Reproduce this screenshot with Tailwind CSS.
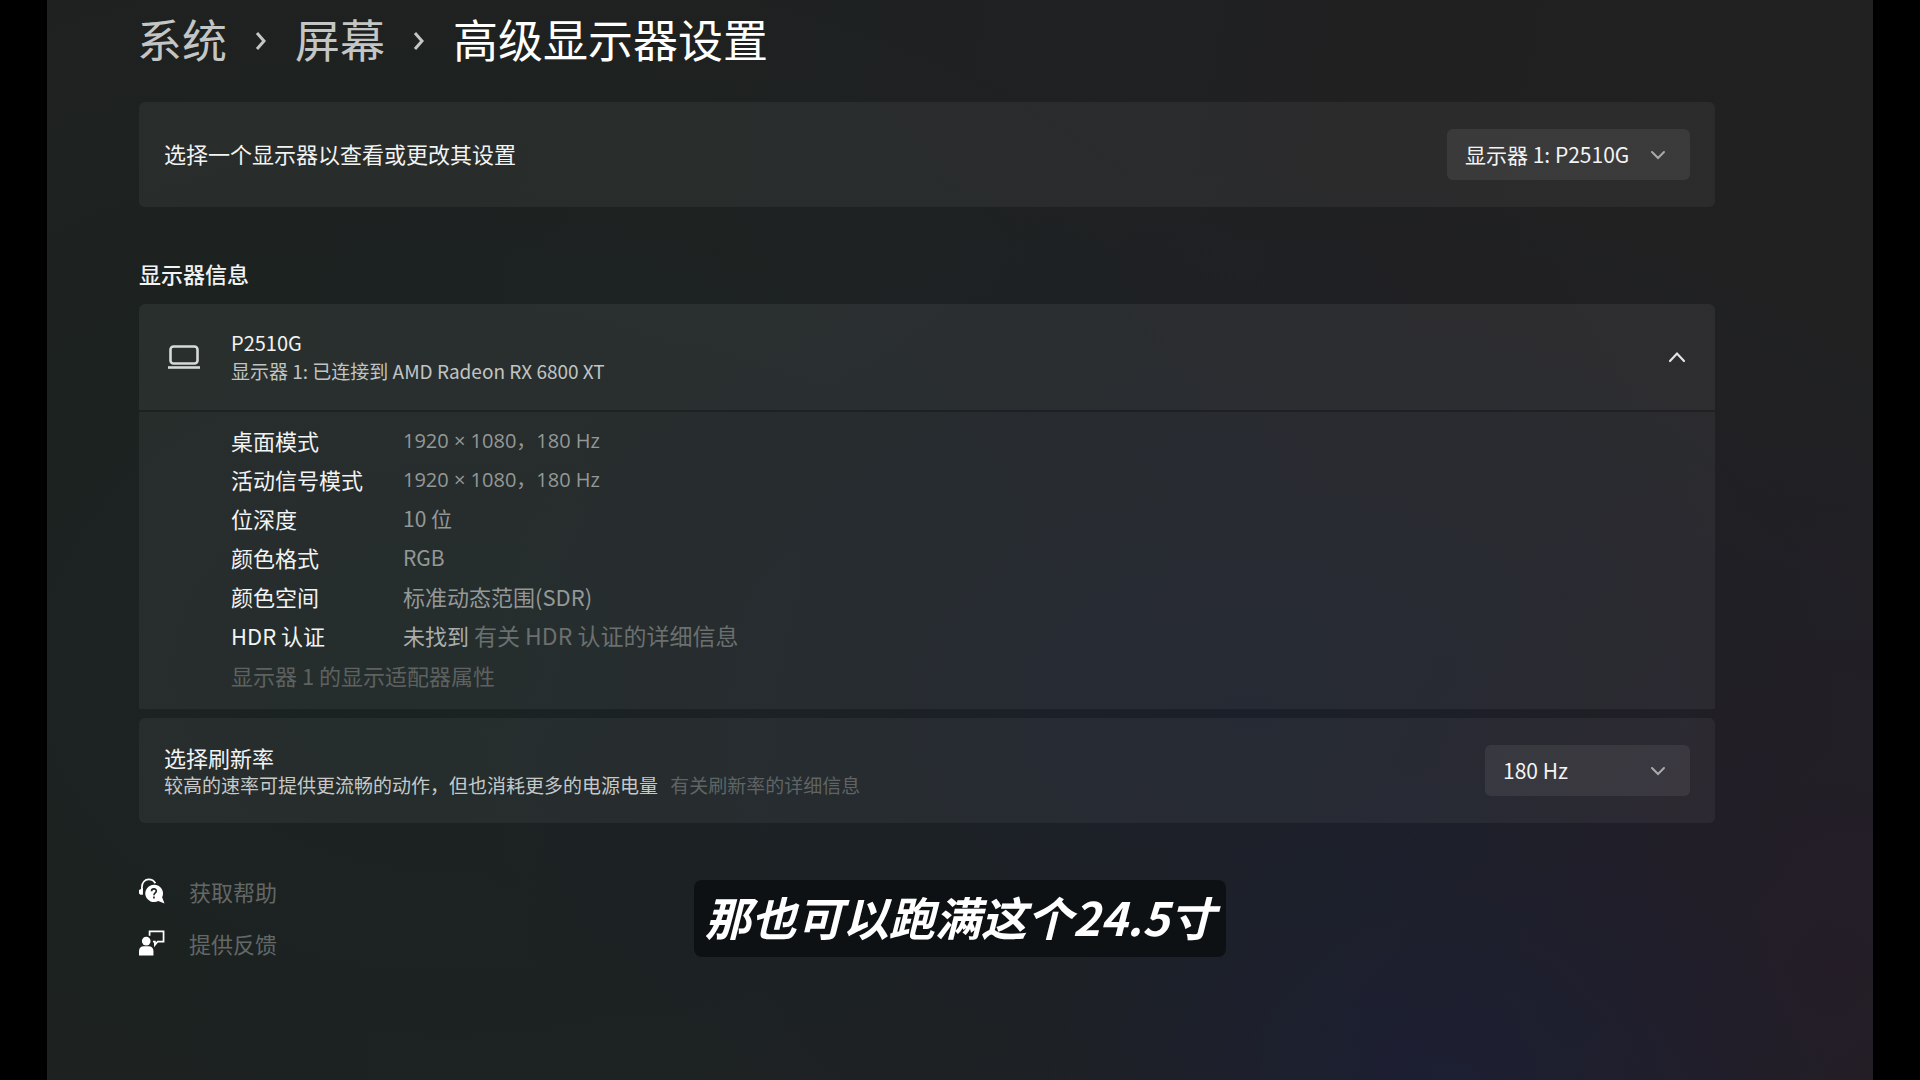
<!DOCTYPE html>
<html lang="zh-CN">
<head>
    <meta charset="UTF-8">
    <meta name="viewport" content="width=device-width, initial-scale=1.0">
    <title>高级显示器设置</title>
    <script src="https://cdn.jsdelivr.net/npm/@tailwindcss/browser@4"></script>
    <style>
        .mica {
            background:
                radial-gradient(ellipse 22% 34% at 76% 103%, rgba(27, 31, 54, 0.85), transparent),
                radial-gradient(ellipse 28% 50% at 98% 90%, rgba(36, 28, 40, 0.8), transparent),
                radial-gradient(ellipse 45% 50% at 66% 66%, rgba(27, 31, 42, 0.9), transparent),
                radial-gradient(ellipse 60% 75% at 22% 62%, rgba(26, 35, 34, 1), transparent),
                linear-gradient(100deg, #1f211f 0%, #1f2121 40%, #202021 65%, #212122 100%);
        }
    </style>
</head>
<body class="bg-black text-[#f2f3f3] font-['Noto_Sans_CJK_SC',sans-serif] text-[22px] leading-7">
    <div class="mica min-h-screen mx-[47px] pl-[92px] pr-[158px] pt-[9px]">
        <!-- Breadcrumb -->
        <nav class="flex items-center gap-7 -ml-[2px] text-[45px] leading-[60px]">
            <a href="#" class="text-[#c4c6c5]">系统</a>
            <svg class="w-3 h-5 mt-1" viewBox="0 0 12 20" fill="none" stroke="#c4c6c5" stroke-width="3"><path d="M2 2l7 8-7 8"/></svg>
            <a href="#" class="text-[#c4c6c5]">屏幕</a>
            <svg class="w-3 h-5 mt-1" viewBox="0 0 12 20" fill="none" stroke="#c4c6c5" stroke-width="3"><path d="M2 2l7 8-7 8"/></svg>
            <h1 class="text-white">高级显示器设置</h1>
        </nav>

        <main>
            <!-- Display picker -->
            <section class="mt-[33px] h-[105px] px-[25px] flex items-center justify-between rounded-md bg-white/5">
                <label for="display" class="pb-1">选择一个显示器以查看或更改其设置</label>
                <div class="relative">
                    <select id="display" class="appearance-none w-[243px] h-[51px] pl-[18px] pb-[2px] rounded-md bg-white/7 text-[21px]">
                        <option>显示器 1: P2510G</option>
                    </select>
                    <svg class="absolute right-6 top-[21px] w-4 h-[10px] pointer-events-none" viewBox="0 0 16 10" fill="none" stroke="#a9aaab" stroke-width="2" stroke-linecap="round"><path d="M2 2l6 6 6-6"/></svg>
                </div>
            </section>

            <h2 class="mt-[52px] mb-[17px] font-medium">显示器信息</h2>

            <!-- Display details -->
            <section>
                <button type="button" aria-expanded="true" class="w-full h-[106px] pl-[29px] pr-[29px] flex items-center text-left rounded-t-md bg-white/6">
                    <svg class="w-8 h-6 mr-[31px]" viewBox="0 0 32 24" fill="none" stroke="#d6dad8"><rect x="2.5" y="1.5" width="27" height="17" rx="3" stroke-width="2.6"/><path d="M0 22.5h32" stroke-width="2.6"/></svg>
                    <span class="flex-1">
                        <span class="block text-[20px]">P2510G</span>
                        <span class="block text-[19px] text-[#c0c4c3]">显示器 1: 已连接到 AMD Radeon RX 6800 XT</span>
                    </span>
                    <svg class="w-[18px] h-3" viewBox="0 0 18 12" fill="none" stroke="#e4e4e6" stroke-width="2.2" stroke-linecap="round"><path d="M2 10l7-7.500 7 7.500"/></svg>
                </button>
                <div class="mt-[2px] pl-[92px] pt-[9px] pb-[14px] bg-white/5">
                    <dl class="grid grid-cols-[172px_1fr] leading-[39px]">
                        <dt>桌面模式</dt>
                        <dd class="font-['Open_Sans','Noto_Sans_CJK_SC',sans-serif] text-[20px] text-[#949897]">1920 × 1080，180 Hz</dd>
                        <dt>活动信号模式</dt>
                        <dd class="font-['Open_Sans','Noto_Sans_CJK_SC',sans-serif] text-[20px] text-[#949897]">1920 × 1080，180 Hz</dd>
                        <dt>位深度</dt>
                        <dd class="text-[21px] text-[#949897]">10 位</dd>
                        <dt>颜色格式</dt>
                        <dd class="text-[21px] text-[#949897]">RGB</dd>
                        <dt>颜色空间</dt>
                        <dd class="text-[#949897]">标准动态范围(SDR)</dd>
                        <dt>HDR 认证</dt>
                        <dd class="text-[#aaadac]">未找到 <a href="#" class="text-[23px] text-[#6b706f]">有关 HDR 认证的详细信息</a></dd>
                    </dl>
                    <a href="#" class="block w-fit leading-10 text-[#5d6261]">显示器 1 的显示适配器属性</a>
                </div>
            </section>

            <!-- Refresh rate -->
            <section class="mt-[9px] h-[105px] px-[25px] flex items-center justify-between rounded-md bg-white/5">
                <div>
                    <label for="refresh" class="block">选择刷新率</label>
                    <p class="text-[19px] text-[#c6c9c8]">较高的速率可提供更流畅的动作，但也消耗更多的电源电量 <a href="#" class="ml-2 text-[#5f6465]">有关刷新率的详细信息</a></p>
                </div>
                <div class="relative">
                    <select id="refresh" class="appearance-none w-[205px] h-[51px] pl-[18px] pb-[2px] rounded-md bg-white/7 text-[21px]">
                        <option>180 Hz</option>
                    </select>
                    <svg class="absolute right-6 top-[21px] w-4 h-[10px] pointer-events-none" viewBox="0 0 16 10" fill="none" stroke="#a9aaab" stroke-width="2" stroke-linecap="round"><path d="M2 2l6 6 6-6"/></svg>
                </div>
            </section>
        </main>

        <footer class="mt-[42px] text-[#636867]">
            <a href="#" class="flex items-center gap-6 w-fit h-[52px]">
                <svg class="w-[26px] h-[26px]" viewBox="0 0 27 27">
                    <path d="M3 16V9.500C3 4.500 6.300 1.500 10 1.500c3.400 0 5.600 1.500 7 4" fill="none" stroke="#fff" stroke-width="1.800"/>
                    <path d="M0 12.500l4-2v7H1.500L0 16z" fill="#fff"/>
                    <path d="M15.500 7a9 9 0 1 0 4.500 16.800l6.500 2.700-2.500-6.500A9 9 0 0 0 15.500 7z" fill="#fff"/>
                    <path d="M13 13.800c0-3.400 5-3.200 5-.3 0 2-2.500 2-2.500 4.300M15.500 19.300v2" fill="none" stroke="#1b2322" stroke-width="1.700"/>
                </svg>
                获取帮助
            </a>
            <a href="#" class="flex items-center gap-6 w-fit h-[52px]">
                <svg class="w-[26px] h-[26px]" viewBox="0 0 27 27">
                    <circle cx="7.500" cy="11.500" r="4.500" fill="#fff"/>
                    <path d="M0 26.500v-4.500c0-3 2-5 5-5h5c3 0 5 2 5 5v4.500z" fill="#fff"/>
                    <path d="M11 6V1.500h14.500v10.500h-6l-3 3.500v-3.500h-2" fill="none" stroke="#fff" stroke-width="1.800"/>
                </svg>
                提供反馈
            </a>
        </footer>
    </div>

    <!-- Caption -->
    <div class="fixed inset-x-0 bottom-[123px] flex justify-center">
        <p class="h-[77px] px-[11px] rounded-lg bg-[#0c0f12]/90 text-white text-[46px] leading-[72px] font-bold italic whitespace-nowrap">那也可以跑满这个24.5寸</p>
    </div>
</body>
</html>
